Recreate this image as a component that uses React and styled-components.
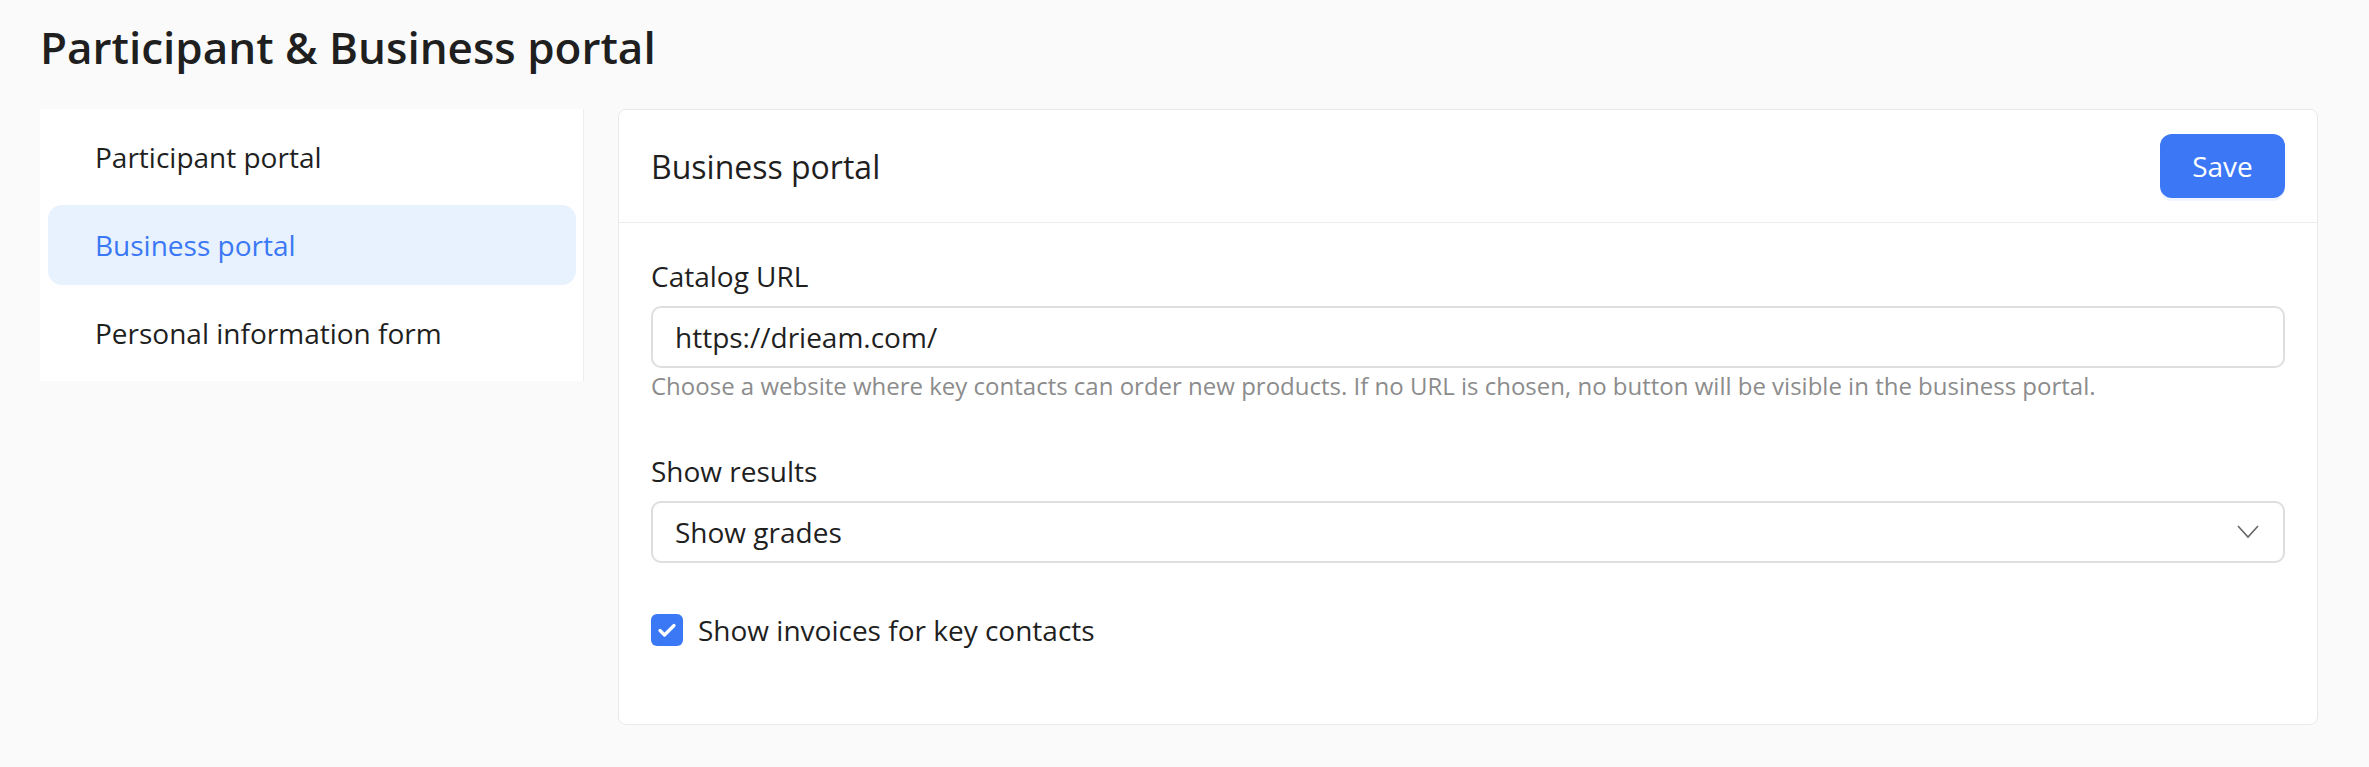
import React, { useState } from 'react'
import styled, { createGlobalStyle } from 'styled-components'

const GlobalStyle = createGlobalStyle`
body {
  margin: 0;
  background: #fafafa;
  font-family: 'Open Sans', 'Noto Sans', sans-serif;
  color: #1f1f1f;
}
* {
  box-sizing: border-box;
}
`

const Page = styled.div`
padding: 18px 51px 40px 40px;
`

const PageTitle = styled.h1`
margin: 0 0 33px;
font-size: 44px;
line-height: 58px;
font-weight: 600;
color: #1f1f1f;
`

const Layout = styled.div`
display: flex;
align-items: flex-start;
gap: 34px;
`

const Sidebar = styled.nav`
width: 544px;
flex-shrink: 0;
background: #fff;
border-right: 1px solid #ededed;
padding: 8px 7px 8px 8px;
display: flex;
flex-direction: column;
gap: 8px;
`

const NavItem = styled.a`
display: flex;
align-items: center;
height: 80px;
padding-left: 47px;
border-radius: 14px;
font-size: 28px;
cursor: pointer;
color: ${p => (p.$active ? '#3b78f5' : '#1f1f1f')};
background: ${p => (p.$active ? '#e8f2fe' : 'transparent')};
`

const Card = styled.section`
flex: 1;
background: #fff;
border: 1px solid #e9e9e9;
border-radius: 8px;
`

const CardHeader = styled.header`
display: flex;
align-items: center;
justify-content: space-between;
padding: 24px 32px;
border-bottom: 1px solid #ececec;
`

const CardTitle = styled.h2`
margin: 0;
font-size: 32px;
font-weight: 400;
`

const SaveButton = styled.button`
height: 64px;
width: 125px;
border: none;
border-radius: 12px;
background: #3c78f5;
color: #fff;
font-family: inherit;
font-size: 28px;
cursor: pointer;
box-shadow: 0 3px 0 rgba(59, 120, 245, 0.08);
`

const CardBody = styled.div`
padding: 32px 32px 73px;
`

const Field = styled.div`
margin-bottom: 46px;
`

const Label = styled.label`
display: block;
font-size: 28px;
line-height: 42px;
margin-bottom: 9px;
`

const TextInput = styled.input`
display: block;
width: 100%;
height: 62px;
border: 2px solid #dedede;
border-radius: 10px;
padding: 0 22px;
font-family: inherit;
font-size: 28px;
color: #1f1f1f;
outline: none;
`

const Help = styled.div`
font-size: 24px;
line-height: 36px;
color: #8c8c8c;
`

const Select = styled.div`
display: flex;
align-items: center;
justify-content: space-between;
height: 62px;
border: 2px solid #dedede;
border-radius: 10px;
padding: 0 24px 0 22px;
font-size: 28px;
cursor: pointer;
`

const CheckRow = styled.label`
display: flex;
align-items: center;
gap: 15px;
height: 42px;
font-size: 28px;
cursor: pointer;
`

const Box = styled.span`
width: 32px;
height: 32px;
border-radius: 6px;
background: ${p => (p.$checked ? '#3b78f6' : '#fff')};
border: ${p => (p.$checked ? 'none' : '2px solid #dedede')};
display: flex;
align-items: center;
justify-content: center;
`

const Chevron = () => (
    <svg width="22" height="14" viewBox="0 0 22 14" fill="none">
        <path d="M1 1l10 11L21 1" stroke="#666" strokeWidth="1.6" />
    </svg>
)

const Check = () => (
    <svg width="20" height="16" viewBox="0 0 20 16" fill="none">
        <path d="M3 8.5l4.5 4.5L17 3.5" stroke="#fff" strokeWidth="3.2" strokeLinecap="round" strokeLinejoin="round" />
    </svg>
)

const navItems = ['Participant portal', 'Business portal', 'Personal information form']

const App = () => {
    const [active, setActive] = useState('Business portal')
    const [url, setUrl] = useState('https://drieam.com/')
    const [invoices, setInvoices] = useState(true)

    return (
        <Page>
            <GlobalStyle />
            <PageTitle>Participant &amp; Business portal</PageTitle>
            <Layout>
                <Sidebar>
                    {navItems.map(item => (
                        <NavItem key={item} $active={item === active} onClick={() => setActive(item)}>
                            {item}
                        </NavItem>
                    ))}
                </Sidebar>
                <Card>
                    <CardHeader>
                        <CardTitle>Business portal</CardTitle>
                        <SaveButton>Save</SaveButton>
                    </CardHeader>
                    <CardBody>
                        <Field>
                            <Label htmlFor="catalog">Catalog URL</Label>
                            <TextInput id="catalog" value={url} onChange={e => setUrl(e.target.value)} />
                            <Help>
                                Choose a website where key contacts can order new products. If no URL is chosen, no button will be visible in the business portal.
                            </Help>
                        </Field>
                        <Field>
                            <Label>Show results</Label>
                            <Select>
                                <span>Show grades</span>
                                <Chevron />
                            </Select>
                        </Field>
                        <CheckRow onClick={() => setInvoices(!invoices)}>
                            <Box $checked={invoices}>{invoices && <Check />}</Box>
                            Show invoices for key contacts
                        </CheckRow>
                    </CardBody>
                </Card>
            </Layout>
        </Page>
    )
}

export default App
